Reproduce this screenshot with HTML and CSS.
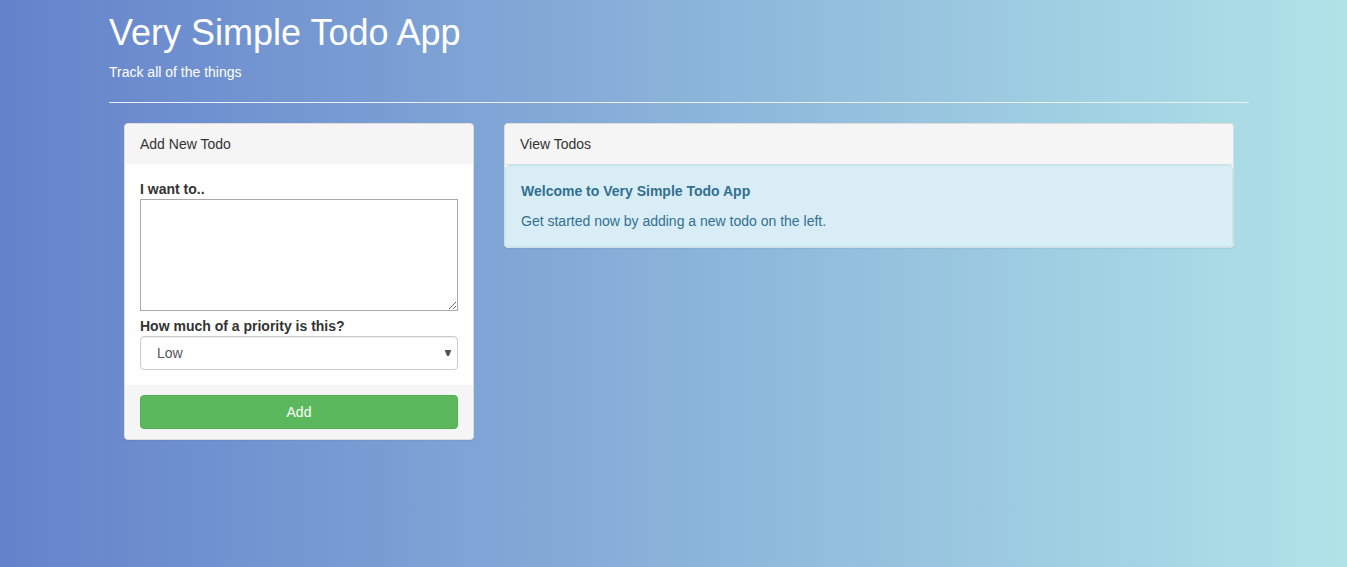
FILE: index.html
```html
<!DOCTYPE html>
<html lang="en">
<head>
<meta charset="utf-8">
<title>Very Simple Todo App</title>
<link rel="stylesheet" href="styles.css">
</head>
<body>
<div class="container">
  <header class="header">
    <h1>Very Simple Todo App</h1>
    <p>Track all of the things</p>
  </header>
  <hr class="divider">
  <main class="columns">
    <form class="panel">
      <div class="panel-heading">Add New Todo</div>
      <div class="panel-body">
        <label for="todo-text">I want to..</label>
        <textarea class="todo-text" id="todo-text"></textarea>
        <label for="priority">How much of a priority is this?</label>
        <div class="select-wrap">
          <select class="priority" id="priority">
            <option>Low</option>
            <option>Medium</option>
            <option>High</option>
          </select>
          <svg class="arrow" viewBox="0 0 6 6" aria-hidden="true"><path d="M0 0h6v1L4 6H2L0 1z"/></svg>
        </div>
      </div>
      <div class="panel-footer"><button class="add" type="button">Add</button></div>
    </form>
    <section class="panel">
      <div class="panel-heading panel-heading-ruled">View Todos</div>
      <div class="welcome">
        <strong>Welcome to Very Simple Todo App</strong>
        <p>Get started now by adding a new todo on the left.</p>
      </div>
    </section>
  </main>
</div>
</body>
</html>
```
FILE: styles.css
```css
* { box-sizing: border-box; }
html { min-height: 100%; }
body {
  min-height: 100vh;
  margin: 0;
  padding-left: 11px;
  background: linear-gradient(to right, #6482cb, #b0e3e8);
  color: #333;
  font: 14px/20px "Liberation Sans", Arial, sans-serif;
}
.container {
  max-width: 1140px;
  margin: 0 auto;
  padding-top: 12px;
}
.header { color: #fff; }
h1 { margin: 0 0 8px; font-size: 36px; font-weight: 500; line-height: 42px; }
p { margin: 0; }
.divider { margin: 20px 0; border: 0; border-top: 1px solid #eee; }
.columns {
  display: grid;
  grid-template-columns: 350px 1fr;
  align-items: start;
  gap: 30px;
  padding: 0 15px;
}
.panel {
  min-width: 0;
  border: 1px solid #ddd;
  border-radius: 4px;
  background: #fff;
  box-shadow: 0 1px 1px rgba(0, 0, 0, .05);
}
.panel-heading { padding: 10px 15px; background: #f5f5f5; border-radius: 3px 3px 0 0; }
.panel-heading-ruled { border-bottom: 1px solid #ddd; }
.panel-body { padding: 15px; }
label { display: block; font-weight: 700; }
.todo-text {
  display: block;
  width: 100%;
  height: 112px;
  margin-bottom: 5px;
  border: 1px solid #a9a9a9;
  border-radius: 0;
  background: #fff;
}
.select-wrap { position: relative; }
.priority {
  display: block;
  width: 100%;
  height: 34px;
  padding: 6px 16px;
  border: 1px solid #ccc;
  border-radius: 4px;
  background: #fff;
  box-shadow: inset 0 1px 1px rgba(0, 0, 0, .075);
  color: #555;
  font: inherit;
  appearance: none;
}
.arrow { position: absolute; top: 14px; right: 7px; width: 6px; height: 6px; fill: #555; pointer-events: none; }
.panel-footer { padding: 10px 15px; background: #f5f5f5; border-radius: 0 0 3px 3px; }
.add {
  display: block;
  width: 100%;
  height: 34px;
  border: 1px solid #4cae4c;
  border-radius: 4px;
  background: #5cb85c;
  color: #fff;
  font: inherit;
}
.welcome {
  padding: 15px;
  border: 1px solid #bce8f1;
  border-radius: 4px;
  background: #d9edf7;
  color: #31708f;
}
.welcome p { margin-top: 10px; }
```
